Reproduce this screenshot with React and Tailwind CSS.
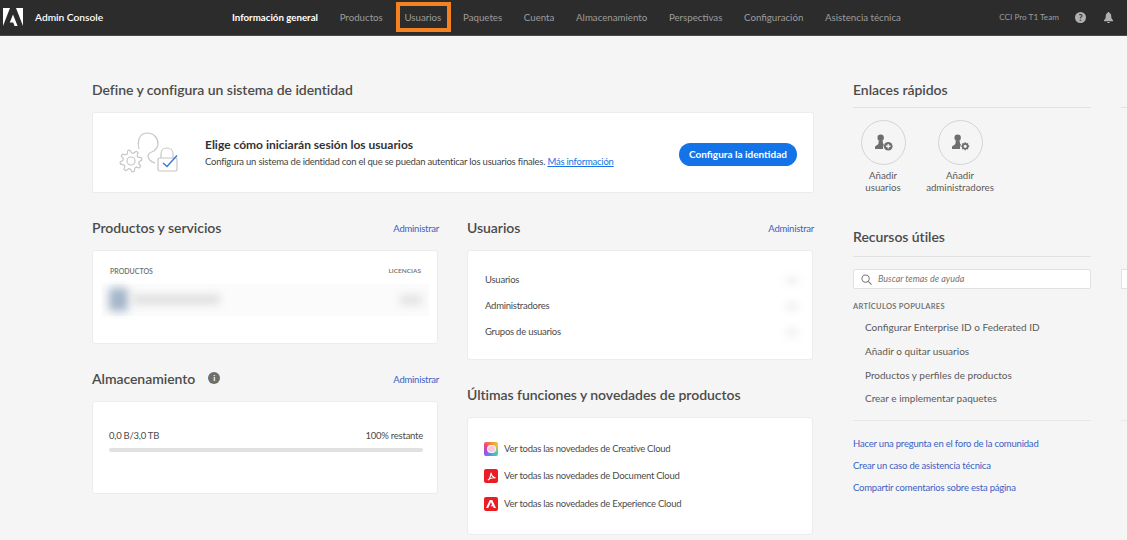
const navItems = ["Productos", "Usuarios", "Paquetes", "Cuenta", "Almacenamiento", "Perspectivas", "Configuración", "Asistencia técnica"];
const articles = ["Configurar Enterprise ID o Federated ID", "Añadir o quitar usuarios", "Productos y perfiles de productos", "Crear e implementar paquetes"];
const links = ["Hacer una pregunta en el foro de la comunidad", "Crear un caso de asistencia técnica", "Compartir comentarios sobre esta página"];

function AdobeLogo({ className }) {
  return (
    <svg viewBox="0 0 20 19" className={className} fill="currentColor">
      <path d="M0 0h7L0 18z" />
      <path d="M13 0h7v18z" />
      <path d="M10 6.5l4.6 11.5h-3l-1.4-3.6H6.8z" />
    </svg>
  );
}

function UserIcon({ gear }) {
  return (
    <svg viewBox="0 0 20 18" className="w-[19px] h-[17px] text-[#6e6e6e]" fill="currentColor">
      <circle cx="7" cy="4" r="3.4" />
      <path d="M5 7h4l.5 3 1 1.4c-.7.8-1 1.8-1 3.1 0 .5.1 1 .2 1.5H1v-2.6c1-1.4 3.2-1.6 3.6-3z" />
      {gear ? (
        <g>
          <circle cx="15" cy="13" r="2.6" fill="none" stroke="currentColor" strokeWidth="1.8" />
          <path d="M15 8.7v1.6M15 15.7v1.6M10.7 13h1.6M17.700 13h1.6M12 10l1.1 1.1M16.900 14.900L18 16M18 10l-1.100 1.100M13.100 14.900L12 16" stroke="currentColor" strokeWidth="1.4" />
        </g>
      ) : (
        <g>
          <circle cx="15" cy="13" r="4.6" />
          <path d="M15 10.6v4.8M12.6 13h4.8" stroke="#f5f5f5" strokeWidth="1.4" />
        </g>
      )}
    </svg>
  );
}

// gear outline for the identity drawing, 8 teeth
const gearPoints = Array.from({ length: 32 }, (_, i) => {
  const a = ((i - 1.5) * Math.PI) / 16;
  const r = i % 4 < 2 ? 11 : 8;
  return (131 + r * Math.cos(a)).toFixed(1) + "," + (160 + r * Math.sin(a)).toFixed(1);
}).join(" ");

function IdentityArt() {
  return (
    <svg viewBox="118 130 62 44" className="w-[62px] h-[44px] shrink-0" fill="none" stroke="#c6c6c6" strokeWidth="1.2">
      <path d="M139 148c-1.500-4-1.500-16 8-16 7 0 11 5 11 11 0 3-2 5-4 7-3 1-6 2-6 5s3 6 7 7" />
      <polygon points={gearPoints} strokeLinejoin="round" />
      <circle cx="131" cy="160" r="4" />
      <rect x="158" y="157" width="19" height="13" rx="1.500" />
      <path d="M161 157v-4c0-8 12-8 12 0v4" />
      <path d="M163 162l4 3.500 10-11" stroke="#3b78d8" strokeWidth="1.500" />
    </svg>
  );
}

function CardTitle({ children, action }) {
  return (
    <div className="flex items-center justify-between h-5">
      <div className="flex items-center gap-[13px] text-[14px] font-semibold tracking-[-0.05px] text-[#4b4b4b]">{children}</div>
      {action && <a className="text-[9.500px] tracking-[-0.25px] text-[#3b5fc4] pt-[5px] -mr-px">{action}</a>}
    </div>
  );
}

function Blur({ className }) {
  return <div className={"blur-[4px] " + className}></div>;
}

function ProductIcon({ children, className }) {
  return (
    <span className={"w-[14px] h-[14px] rounded-[2px] flex items-center justify-center shrink-0 " + className}>
      {children}
    </span>
  );
}

export default function App() {
  return (
    <div className="w-[1127px] h-[540px] overflow-hidden bg-[#f5f5f5] font-['Lato',sans-serif] text-[#4b4b4b]">
      <header className="h-[36px] bg-[#2c2c2c] border-b border-[#4a4a4a] flex items-center text-[9.700px]">
        <div className="w-[232px] flex items-center shrink-0">
          <AdobeLogo className="w-[20px] h-[19px] ml-[3px] text-white" />
          <span className="ml-[12px] text-[10.200px] text-white font-semibold">Admin Console</span>
        </div>
        <nav className="flex items-center gap-[21.700px] text-[#9d9d9d]">
          <span className="text-white font-bold">Información general</span>
          {navItems.map((item) => (
            <span key={item} className="relative">
              {item}
              {item === "Usuarios" && (
                <span className="absolute -left-[8px] -right-[10px] -top-[8px] -bottom-[7px] border-[4px] border-[#f58220]"></span>
              )}
            </span>
          ))}
        </nav>
        <span className="ml-auto text-[8.200px] text-[#9d9d9d]">CCI Pro T1 Team</span>
        <span className="ml-[16px] w-[11px] h-[11px] rounded-full bg-[#b0b0b0] text-[#2c2c2c] text-[9px] font-bold flex items-center justify-center">?</span>
        <svg viewBox="0 0 12 12" className="ml-[17px] mr-[13px] w-[11px] h-[11px] text-[#b0b0b0]" fill="currentColor">
          <path d="M6 0c.8 0 1 .5 1 1 1.6.5 2 2 2 3.5 0 2 .8 3.5 2 4.5v1H1V9c1.2-1 2-2.500 2-4.500C3 3 3.400 1.500 5 1c0-.5.2-1 1-1z" />
          <path d="M4.500 10.800h3C7.500 11.600 6.800 12 6 12s-1.500-.4-1.500-1.200z" />
        </svg>
      </header>

      <main className="flex pl-[92px] pt-[43px]">
        <div className="w-[722px] shrink-0">
          <CardTitle>Define y configura un sistema de identidad</CardTitle>
          <section className="mt-[13px] h-[81px] bg-white rounded-[2px] border border-[#ececec] flex items-center pl-[25px] pr-[16px]">
            <IdentityArt />
            <div className="ml-[25px]">
              <div className="text-[12px] font-bold text-[#333]">Elige cómo iniciarán sesión los usuarios</div>
              <div className="mt-px text-[9.500px] tracking-[-0.22px] text-[#444]">
                Configura un sistema de identidad con el que se puedan autenticar los usuarios finales. <a className="text-[#1473e6] underline">Más información</a>
              </div>
            </div>
            <button className="ml-auto mt-[3px] h-[23px] w-[118px] rounded-full bg-[#1473e6] text-white text-[10px] font-bold">Configura la identidad</button>
          </section>

          <div className="mt-[24px] grid grid-cols-[346px_346px] gap-x-[29px]">
            <div>
              <CardTitle action="Administrar">Productos y servicios</CardTitle>
              <section className="mt-[13px] h-[94px] bg-white rounded-[3px] border border-[#ececec] pt-[15px] pl-[17px] pr-[16px]">
                <div className="flex justify-between items-center text-[7px] font-semibold text-[#6e6e6e]">
                  <span>PRODUCTOS</span>
                  <span className="text-[6.500px]">LICENCIAS</span>
                </div>
                <div className="mt-[7px] -mx-[8px] px-[7px] h-[32px] flex items-center justify-between bg-[#fbfbfb]">
                  <div className="flex items-center gap-[4px]">
                    <Blur className="w-[19px] h-[23px] rounded bg-[#a3b5c8]" />
                    <Blur className="w-[88px] h-[9px] bg-[#dcdcdc]" />
                  </div>
                  <Blur className="w-[22px] h-[10px] bg-[#e2e2e2]" />
                </div>
              </section>

              <div className="mt-[24px]">
                <CardTitle action="Administrar">
                  Almacenamiento
                  <span className="w-[12px] h-[12px] rounded-full bg-[#6e6e6e] text-white text-[8px] font-bold flex items-center justify-center">i</span>
                </CardTitle>
              </div>
              <section className="mt-[13px] h-[93px] bg-white rounded-[3px] border border-[#ececec] pt-[27px] pl-[16px] pr-[14px]">
                <div className="flex justify-between text-[9.500px] tracking-[-0.25px] text-[#4b4b4b]">
                  <span>0,0 B/3,0 TB</span>
                  <span>100% restante</span>
                </div>
                <div className="mt-[5px] h-[4px] rounded-full bg-[#e1e1e1]"></div>
              </section>
            </div>

            <div>
              <CardTitle action="Administrar">Usuarios</CardTitle>
              <section className="mt-[13px] h-[110px] bg-white rounded-[3px] border border-[#ececec] pt-[22px] pl-[17px] pr-[14px] flex flex-col gap-[12px] text-[9.500px] tracking-[-0.25px]">
                {["Usuarios", "Administradores", "Grupos de usuarios"].map((row) => (
                  <div key={row} className="h-[14px] flex items-center justify-between">
                    <span>{row}</span>
                    <Blur className="w-[12px] h-[7px] bg-[#ececec]" />
                  </div>
                ))}
              </section>

              <div className="mt-[24px]">
                <CardTitle>Últimas funciones y novedades de productos</CardTitle>
              </div>
              <section className="mt-[13px] h-[118px] bg-white rounded-[3px] border border-[#ececec] pt-[24px] pl-[16px] flex flex-col gap-[13px] text-[9.500px] tracking-[-0.26px]">
                <div className="flex items-center gap-[6px]">
                  <ProductIcon className="bg-[conic-gradient(#f09030,#f0c040,#50d0a0,#40a0f0,#a050e0,#f0408a,#f09030)]">
                    <span className="w-[9px] h-[8px] rounded-full bg-[#f6c8d8] border border-white/80"></span>
                  </ProductIcon>
                  Ver todas las novedades de Creative Cloud
                </div>
                <div className="flex items-center gap-[6px]">
                  <ProductIcon className="bg-[#ec1c24]">
                    <svg viewBox="0 0 10 10" className="w-[9px] h-[9px]" fill="none" stroke="white" strokeWidth="1.200">
                      <path d="M1 9c2-1 3-4 3.500-8 .5 3 2 5 5 5.500C6 6 3 7 1 9z" />
                    </svg>
                  </ProductIcon>
                  Ver todas las novedades de Document Cloud
                </div>
                <div className="flex items-center gap-[6px]">
                  <ProductIcon className="bg-[#ec1c24]">
                    <svg viewBox="0 0 10 10" className="w-[10px] h-[10px]" fill="white">
                      <path d="M3.800 1h2.400L10 9H7.800L7 7.200H4.500L6 5.500 5 3 2.200 9H0z" />
                    </svg>
                  </ProductIcon>
                  Ver todas las novedades de Experience Cloud
                </div>
              </section>
            </div>
          </div>
        </div>

        <aside className="ml-[39px] w-[238px] shrink-0">
          <CardTitle>Enlaces rápidos</CardTitle>
          <div className="mt-[8px] h-px bg-[#e1e1e1]"></div>
          <div className="mt-[12px] flex text-[9.700px] text-center leading-[12px] text-[#5a5a5a]">
            <div className="w-[60px] flex flex-col items-center">
              <span className="w-[45px] h-[45px] rounded-full border border-[#d4d4d4] flex items-center justify-center">
                <UserIcon />
              </span>
              <span className="mt-[4px]">Añadir<br />usuarios</span>
            </div>
            <div className="w-[80px] ml-[7px] flex flex-col items-center">
              <span className="w-[45px] h-[45px] rounded-full border border-[#d4d4d4] flex items-center justify-center">
                <UserIcon gear />
              </span>
              <span className="mt-[4px]">Añadir<br />administradores</span>
            </div>
          </div>

          <div className="mt-[33px]">
            <CardTitle>Recursos útiles</CardTitle>
          </div>
          <div className="mt-[10px] h-px bg-[#e1e1e1]"></div>
          <div className="mt-[12px] h-[20px] bg-white border border-[#e1e1e1] rounded-[2px] flex items-center pl-[7px] gap-[6px]">
            <svg viewBox="0 0 12 12" className="w-[11px] h-[11px]" fill="none" stroke="#777" strokeWidth="1.100">
              <circle cx="5" cy="5" r="4" />
              <path d="M8 8l3.500 3.500" />
            </svg>
            <span className="text-[9px] italic text-[#777]">Buscar temas de ayuda</span>
          </div>
          <div className="mt-[12px] text-[7.500px] font-bold tracking-[0.3px] text-[#777]">ARTÍCULOS POPULARES</div>
          <div className="mt-[8px] pl-[12px] flex flex-col gap-[9.700px] text-[10px] text-[#5a5a5a]">
            {articles.map((a) => (
              <div key={a} className="h-[14px] leading-[14px]">{a}</div>
            ))}
          </div>
          <div className="mt-[15px] h-px bg-[#e8e8e8]"></div>
          <div className="mt-[16px] flex flex-col gap-[8px] text-[9.500px] tracking-[-0.2px] text-[#3b5fc4]">
            {links.map((l) => (
              <a key={l} className="h-[14px] leading-[14px]">{l}</a>
            ))}
          </div>
        </aside>

        <div className="ml-[30px] w-[100px] shrink-0 pt-[28px]">
          <div className="h-px bg-[#e1e1e1]"></div>
          <div className="mt-[161px] h-[20px] bg-white border border-[#e1e1e1]"></div>
          <div className="mt-[131px] h-px bg-[#e8e8e8]"></div>
        </div>
      </main>
    </div>
  );
}
